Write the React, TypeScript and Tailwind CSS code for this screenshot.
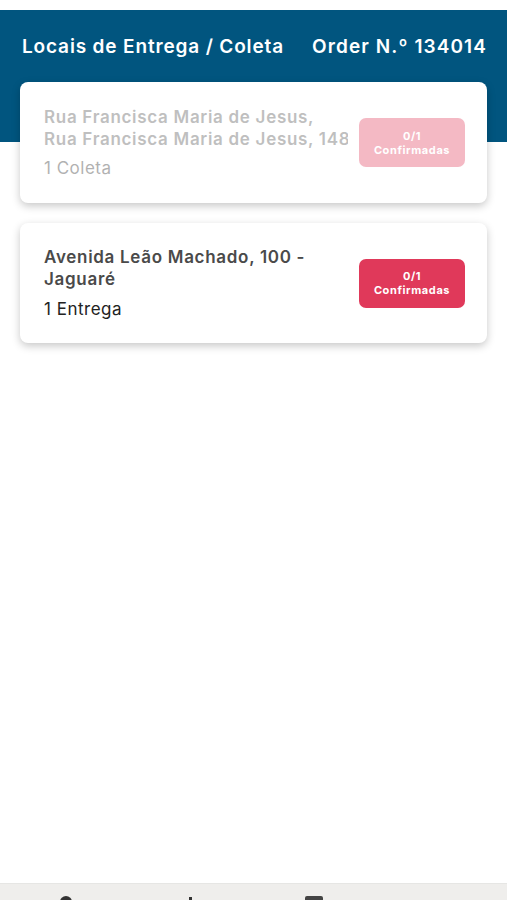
import React from "react";

function Badge() {
  return (
    <div className="w-[106px] h-[49px] shrink-0 rounded-[7px] bg-[#e0395a] flex flex-col items-center justify-center text-white text-[11px] font-bold leading-[14px] tracking-[0.6px]">
      <span>0/1</span>
      <span>Confirmadas</span>
    </div>
  );
}

export default function App() {
  return (
    <div className="w-[507px] h-[900px] bg-white flex flex-col overflow-hidden" style={{ fontFamily: "Inter, Roboto, 'Noto Sans', sans-serif" }}>
      <div className="h-[10px] bg-white shrink-0" />
      <div className="h-[132px] bg-[#01557f] shrink-0 flex items-start justify-between pl-[22px] pr-[20px] pt-[23px]">
        <span className="text-white text-[19px] font-semibold tracking-[0.85px]">Locais de Entrega / Coleta</span>
        <span className="text-white text-[19px] font-semibold tracking-[1.1px]">Order N.º 134014</span>
      </div>
      <div className="flex-1 -mt-[60px] px-[20px] flex flex-col gap-[20px]">
        <div className="h-[121px] bg-white rounded-[8px] shadow-[0_3px_8px_rgba(0,0,0,0.22)] flex items-center pl-[24px] pr-[22px]">
          <div className="flex-1 flex flex-col opacity-35 pr-[10px] min-w-0">
            <div className="w-[304px] overflow-hidden whitespace-nowrap text-[17px] font-semibold leading-[22px] tracking-[0.7px] text-[#4a4a4a]">Rua Francisca Maria de Jesus,</div>
            <div className="w-[304px] overflow-hidden whitespace-nowrap text-[17px] font-semibold leading-[22px] tracking-[0.7px] text-[#4a4a4a]">Rua Francisca Maria de Jesus, 1486</div>
            <div className="text-[17px] leading-[22px] mt-[7px] tracking-[0.5px] text-[#222]">1 Coleta</div>
          </div>
          <div className="opacity-35">
            <Badge />
          </div>
        </div>
        <div className="h-[120px] bg-white rounded-[8px] shadow-[0_3px_8px_rgba(0,0,0,0.22)] flex items-center pl-[24px] pr-[22px]">
          <div className="flex-1 flex flex-col pr-[10px] min-w-0">
            <div className="w-[304px] text-[17px] font-semibold leading-[22px] tracking-[0.7px] text-[#4a4a4a]">Avenida Leão Machado, 100 - Jaguaré</div>
            <div className="text-[17px] leading-[22px] mt-[8px] tracking-[0.5px] text-[#222]">1 Entrega</div>
          </div>
          <Badge />
        </div>
      </div>
      <div className="h-[17px] shrink-0 bg-[#efeeec] border-t border-[#e6e6e4] relative overflow-hidden">
        <div className="absolute left-[60px] top-[12px] w-[12px] h-[10px] rounded-t-full bg-[#333]" />
        <div className="absolute left-[189px] top-[13px] w-[3px] h-[10px] bg-[#333]" />
        <div className="absolute left-[305px] top-[12px] w-[18px] h-[10px] rounded-t-[2px] bg-[#444]" />
      </div>
    </div>
  );
}
